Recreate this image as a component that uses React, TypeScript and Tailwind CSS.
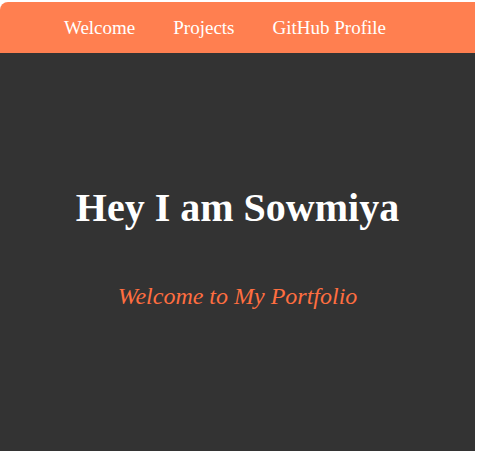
export default function App() {
  return (
    <div className="bg-white pt-[2px] pr-[2px] h-[451px] overflow-hidden font-['Liberation_Serif',_'Times_New_Roman',_serif]">
      <nav className="bg-[#ff7f50] rounded-tl-lg h-[51px] flex items-center pl-[64px] pt-[2px] gap-[38px] text-white text-[19px]">
        <a href="#welcome">Welcome</a>
        <a href="#projects">Projects</a>
        <a href="#github">GitHub Profile</a>
      </nav>
      <section className="bg-[#333333] h-[420px] flex flex-col items-center pt-[131px]">
        <h1 className="text-white font-bold text-[40px] leading-[48px]">Hey I am Sowmiya</h1>
        <p className="text-[#ff6e40] italic text-[24px] leading-[28px] mt-[50px]">Welcome to My Portfolio</p>
      </section>
    </div>
  );
}
